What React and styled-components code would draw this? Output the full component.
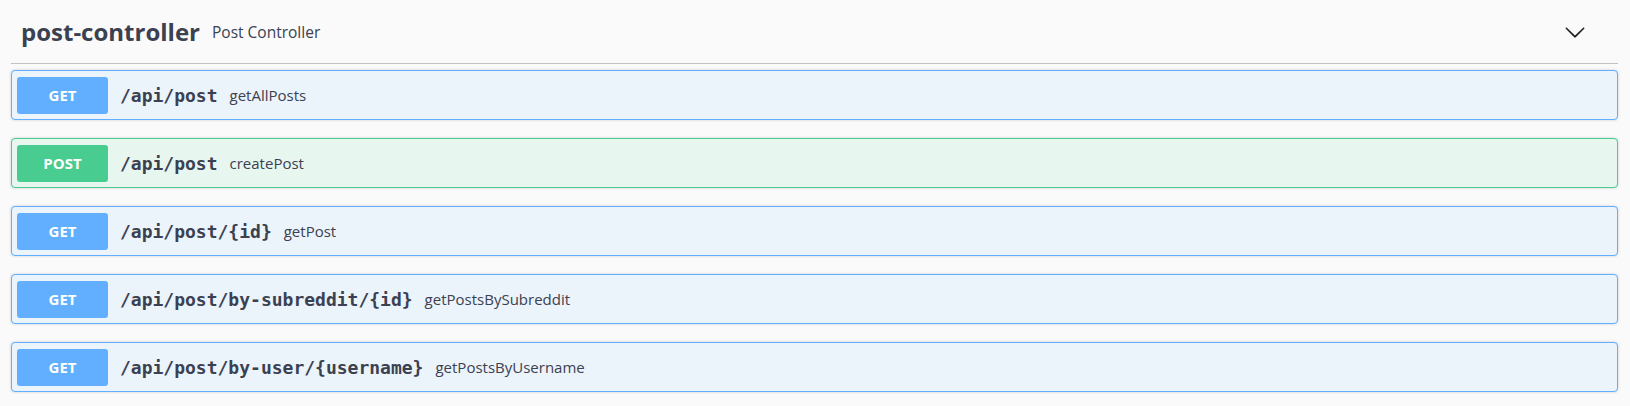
import React from "react";
import styled, { createGlobalStyle } from "styled-components";

const GlobalStyle = createGlobalStyle`
  body {
    margin: 0;
    background: #fafafa;
    font-family: "Open Sans", "Noto Sans", sans-serif;
    color: #3b4151;
  }
`;

const methods = {
  get: { main: "#61affe", bg: "#ebf3fb" },
  post: { main: "#49cc90", bg: "#e8f6f0" },
};

const Section = styled.div`
  padding: 0 12px 0 11px;
`;

const TagHeader = styled.div`
  display: flex;
  align-items: center;
  height: 63px;
  padding: 0 32px 0 10px;
  border-bottom: 1px solid rgba(59, 65, 81, 0.3);
  margin-bottom: 6px;
`;

const TagTitle = styled.h3`
  margin: 0;
  font-size: 24px;
  font-weight: 700;
  line-height: 1;
  color: #3b4151;
`;

const TagDesc = styled.small`
  margin-left: 12px;
  font-size: 15.5px;
  color: #3b4151;
  flex: 1;
`;

const Toggle = styled.button`
  border: none;
  background: none;
  padding: 0;
  display: flex;
  cursor: pointer;
`;

const OpBlock = styled.div`
  display: flex;
  align-items: center;
  height: 48px;
  padding: 0 5px;
  margin-bottom: 18px;
  border: 1px solid ${(p) => methods[p.$method].main};
  background: ${(p) => methods[p.$method].bg};
  border-radius: 4px;
  box-shadow: 0 0 3px rgba(0, 0, 0, 0.19);
`;

const Method = styled.span`
  width: 91px;
  height: 37px;
  display: flex;
  align-items: center;
  justify-content: center;
  border-radius: 3px;
  background: ${(p) => methods[p.$method].main};
  color: #fff;
  font-size: 15px;
  font-weight: 700;
`;

const Path = styled.span`
  margin-left: 12px;
  font-family: "DejaVu Sans Mono", "Liberation Mono", monospace;
  font-size: 18px;
  font-weight: 700;
  color: #3b4151;
`;

const Summary = styled.span`
  margin-left: 12px;
  font-size: 15px;
  color: #3b4151;
`;

const ops = [
  { method: "get", path: "/api/post", name: "getAllPosts" },
  { method: "post", path: "/api/post", name: "createPost" },
  { method: "get", path: "/api/post/{id}", name: "getPost" },
  { method: "get", path: "/api/post/by-subreddit/{id}", name: "getPostsBySubreddit" },
  { method: "get", path: "/api/post/by-user/{username}", name: "getPostsByUsername" },
];

function Chevron() {
  return (
    <svg width="22" height="22" viewBox="0 0 20 20" fill="#1f1f1f">
      <path d="M17.418 6.109c.272-.268.709-.268.979 0s.271.701 0 .969l-7.908 7.83c-.27.268-.707.268-.979 0l-7.908-7.83c-.27-.268-.27-.701 0-.969.271-.268.709-.268.979 0L10 13.25l7.418-7.141z" />
    </svg>
  );
}

export default function App() {
  return (
    <>
      <GlobalStyle />
      <Section>
        <TagHeader>
          <TagTitle>post-controller</TagTitle>
          <TagDesc>Post Controller</TagDesc>
          <Toggle>
            <Chevron />
          </Toggle>
        </TagHeader>
        {ops.map((op, i) => (
          <OpBlock key={i} $method={op.method}>
            <Method $method={op.method}>{op.method.toUpperCase()}</Method>
            <Path>{op.path}</Path>
            <Summary>{op.name}</Summary>
          </OpBlock>
        ))}
      </Section>
    </>
  );
}
